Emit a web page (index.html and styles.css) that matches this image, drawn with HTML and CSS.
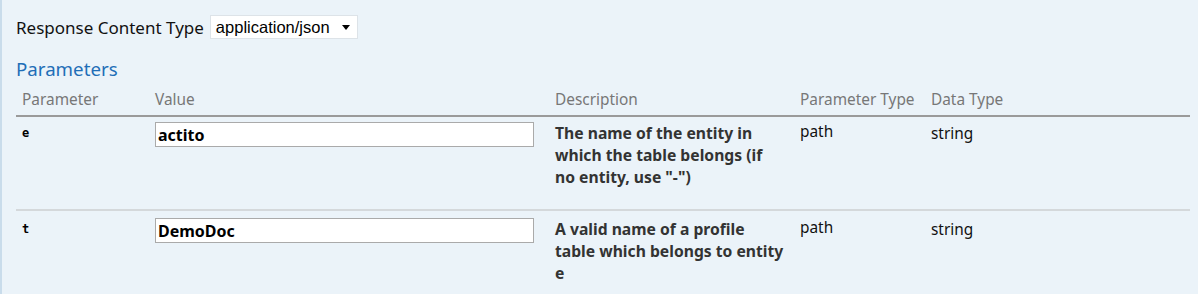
FILE: index.html
```html
<!DOCTYPE html>
<html>
<head>
    <meta charset="UTF-8">
    <title>Parameters</title>
    <link rel="stylesheet" href="styles.css">
</head>
<body>
    <div class="operation">
        <div class="content-type">
            <label for="responseType">Response Content Type</label>
            <div class="select-box" id="responseType">
                <span>application/json</span>
                <span class="caret"></span>
            </div>
        </div>

        <h4 class="section-title">Parameters</h4>

        <table class="params">
            <thead>
                <tr>
                    <th class="col-name">Parameter</th>
                    <th class="col-value">Value</th>
                    <th class="col-desc">Description</th>
                    <th class="col-ptype">Parameter Type</th>
                    <th class="col-dtype">Data Type</th>
                </tr>
            </thead>
            <tbody>
                <tr>
                    <td class="code"><label>e</label></td>
                    <td><input type="text" class="parameter required" value="actito"></td>
                    <td class="markdown"><p>The name of the entity in which the table belongs (if no entity, use "-")</p></td>
                    <td><div class="ptype">path</div></td>
                    <td><span class="model">string</span></td>
                </tr>
                <tr>
                    <td class="code"><label>t</label></td>
                    <td><input type="text" class="parameter required" value="DemoDoc"></td>
                    <td class="markdown"><p>A valid name of a profile table which belongs to entity e</p></td>
                    <td><div class="ptype">path</div></td>
                    <td><span class="model">string</span></td>
                </tr>
            </tbody>
        </table>
    </div>
</body>
</html>
```

FILE: styles.css
```css
body {
    margin: 0;
    font-family: 'Noto Sans', 'Open Sans', sans-serif;
    color: #222;
    background-color: #ebf3f9;
}

.operation {
    height: 294px;
    overflow: hidden;
    box-sizing: border-box;
    border-left: 2px solid #c9dceb;
    background-color: #ebf3f9;
    padding: 15px 10px 0 14px;
}

.content-type {
    display: flex;
    align-items: center;
    gap: 6px;
    font-size: 17px;
    color: #111;
}

.select-box {
    display: flex;
    align-items: center;
    justify-content: space-between;
    width: 148px;
    height: 24px;
    box-sizing: border-box;
    padding: 0 5px 0 5px;
    background-color: #fff;
    border: 1px solid #dde3e8;
    font-family: 'Liberation Sans', Arial, sans-serif;
    font-size: 16.5px;
    color: #000;
}

.caret {
    width: 0;
    height: 0;
    border-left: 4px solid transparent;
    border-right: 4px solid transparent;
    border-top: 5px solid #000;
    margin-right: 2px;
}

.section-title {
    margin: 17px 0 0 0;
    font-size: 18.7px;
    font-weight: normal;
    color: #1f6eb7;
}

.params {
    width: 1174px;
    margin-top: 3px;
    border-collapse: collapse;
}

.params th {
    text-align: left;
    font-weight: normal;
    font-size: 15.4px;
    color: #777;
    padding: 5px 6px 5px 6px;
    border-bottom: 2px solid #9a9a9a;
}

.col-name { width: 121px; }
.col-value { width: 388px; }
.col-desc { width: 233px; }
.col-ptype { width: 119px; }

.params td {
    vertical-align: top;
    padding: 5px 6px 0 6px;
    font-size: 15.4px;
    color: #111;
}

.params tbody tr + tr td {
    padding-top: 7px;
    border-top: 2px solid #d4d8db;
}

.code label {
    display: block;
    padding-top: 4px;
    font-family: 'DejaVu Sans Mono', monospace;
    font-weight: bold;
    font-size: 12px;
    color: #000;
}

.params input {
    display: block;
    width: 379px;
    height: 25px;
    box-sizing: border-box;
    margin: 0;
    padding: 1px 2px;
    border: 1px solid #aaa;
    background-color: #fff;
    font-family: 'Noto Sans', sans-serif;
    font-weight: bold;
    font-size: 16px;
    color: #000;
}

.markdown p {
    width: 230px;
    margin: 0 0 21px 0;
    font-size: 15.7px;
    font-weight: bold;
    line-height: 22px;
    color: #333;
}

.ptype {
    line-height: 19px;
}

.model {
    display: block;
    line-height: 24px;
}
```
